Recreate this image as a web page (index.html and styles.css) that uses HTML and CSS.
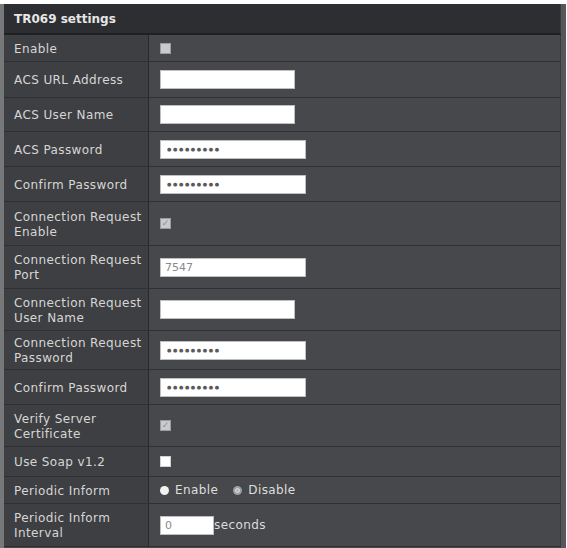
FILE: index.html
```html
<!DOCTYPE html>
<html>
<head>
<meta charset="utf-8">
<link rel="stylesheet" href="styles.css">
</head>
<body>
<div class="panel">
  <div class="header">TR069 settings</div>
  <div class="row h27"><div class="lbl">Enable</div><div class="val"><span class="cb dis"></span></div></div>
  <div class="row h36"><div class="lbl">ACS URL Address</div><div class="val"><span class="inp short"></span></div></div>
  <div class="row h34"><div class="lbl">ACS User Name</div><div class="val"><span class="inp short"></span></div></div>
  <div class="row h35"><div class="lbl">ACS Password</div><div class="val"><span class="inp long pw">●●●●●●●●●</span></div></div>
  <div class="row h35"><div class="lbl">Confirm Password</div><div class="val"><span class="inp long pw">●●●●●●●●●</span></div></div>
  <div class="row h44"><div class="lbl">Connection Request<br>Enable</div><div class="val"><span class="cb dis chk">✓</span></div></div>
  <div class="row h43"><div class="lbl">Connection Request<br>Port</div><div class="val"><span class="inp long num">7547</span></div></div>
  <div class="row h42"><div class="lbl">Connection Request<br>User Name</div><div class="val"><span class="inp short"></span></div></div>
  <div class="row h39"><div class="lbl">Connection Request<br>Password</div><div class="val"><span class="inp long pw">●●●●●●●●●</span></div></div>
  <div class="row h35"><div class="lbl">Confirm Password</div><div class="val"><span class="inp long pw">●●●●●●●●●</span></div></div>
  <div class="row h42"><div class="lbl">Verify Server<br>Certificate</div><div class="val"><span class="cb dis chk">✓</span></div></div>
  <div class="row h30"><div class="lbl">Use Soap v1.2</div><div class="val"><span class="cb white"></span></div></div>
  <div class="row h27"><div class="lbl">Periodic Inform</div><div class="val"><span class="radio on"></span><span class="rtxt">Enable</span><span class="radio off"></span><span class="rtxt">Disable</span></div></div>
  <div class="row h43 last"><div class="lbl">Periodic Inform<br>Interval</div><div class="val"><span class="inp tiny num">0</span><span class="unit">seconds</span></div></div>
</div>
</body>
</html>
```
FILE: styles.css
```css
html, body {
  margin: 0;
  padding: 0;
  background: #ffffff;
}
body {
  font-family: "DejaVu Sans", Verdana, sans-serif;
  font-size: 12px;
  letter-spacing: 0.4px;
  color: #d6d6d6;
  padding-top: 4px;
}
.panel {
  width: 566px;
  border-left: 4px solid #77787a;
  border-right: 5px solid #55575a;
  background: #46484b;
  height: 544px;
  overflow: hidden;
  box-sizing: border-box;
}
.header {
  height: 31px;
  box-sizing: border-box;
  background: #2d2e31;
  border-bottom: 2px solid #1f2022;
  border-right: 1px solid #3a3b3e;
  color: #e6e6e6;
  font-weight: bold;
  font-size: 12px;
  letter-spacing: 0;
  padding-left: 10px;
  display: flex;
  align-items: center;
}
.row {
  display: flex;
  box-sizing: border-box;
  border-bottom: 1px solid #2f3033;
  border-right: 1px solid #3a3b3e;
}
.h27 { height: 27px; }
.h30 { height: 30px; }
.h34 { height: 34px; }
.h35 { height: 35px; }
.h36 { height: 36px; }
.h39 { height: 39px; }
.h42 { height: 42px; }
.h43 { height: 43px; }
.h44 { height: 44px; }
.lbl {
  width: 145px;
  flex: none;
  box-sizing: border-box;
  background: #3e3f42;
  border-right: 1px solid #27282a;
  padding-left: 10px;
  padding-top: 2px;
  display: flex;
  align-items: center;
  line-height: 15px;
}
.val {
  flex: 1;
  background: #46484b;
  padding-left: 11px;
  display: flex;
  align-items: center;
}
.inp {
  display: inline-block;
  box-sizing: border-box;
  height: 19px;
  background: #ffffff;
  border: 1px solid #bfbfbf;
  color: #555;
  line-height: 17px;
  padding-left: 4px;
  font-size: 11px;
  letter-spacing: 0;
}
.short { width: 135px; }
.long { width: 146px; }
.tiny { width: 54px; }
.pw {
  font-size: 5px;
  letter-spacing: 1.6px;
  color: #5a5a5a;
  padding-left: 6px;
}
.num { color: #8a8a8a; font-size: 11px; }
.unit { color: #dcdcdc; font-size: 12px; }
.cb {
  width: 11px;
  height: 11px;
  box-sizing: border-box;
  display: inline-block;
  letter-spacing: 0;
}
.cb.dis {
  background: #c9cacc;
  border: 1px solid #9a9b9d;
}
.cb.chk {
  color: #8e8f92;
  font-size: 9px;
  line-height: 9px;
  text-align: center;
}
.cb.white {
  background: #ffffff;
  border: 1px solid #d0d0d0;
}
.radio {
  width: 9px;
  height: 9px;
  border-radius: 50%;
  display: inline-block;
  box-sizing: border-box;
}
.radio.on { background: #f2f2f2; }
.radio.off { background: #b7b8ba; border: 2px solid #9e9fa1; box-shadow: inset 0 0 0 1px #d8d8d8; }
.rtxt { margin-left: 6px; margin-right: 15px; font-size: 12px; color: #dedede; }
```
